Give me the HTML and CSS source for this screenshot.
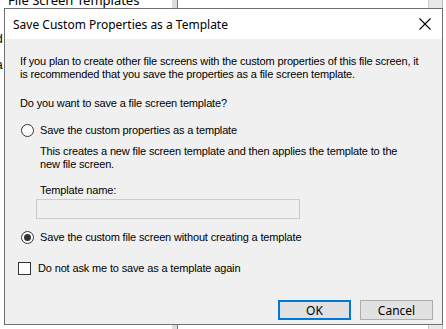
FILE: index.html
```html
<!DOCTYPE html>
<html>
<head>
<meta charset="utf-8">
<link rel="stylesheet" href="styles.css">
</head>
<body>
<div class="desk">
  <div class="bg-title">File Screen Templates</div>
  <div class="bg-left">
    <span class="bg-l1">d</span>
    <span class="bg-l2">a</span>
    <span class="bg-l3">l</span>
  </div>
  <div class="bg-scroll"></div>
  <div class="bg-scroll2"></div>
  <div class="bg-edge"></div>

  <div class="dialog">
    <div class="titlebar">
      <span class="title">Save Custom Properties as a Template</span>
      <svg class="close" width="12" height="12" viewBox="0 0 12 12"><path d="M0.5 0.5 L11.5 11.5 M11.5 0.5 L0.5 11.5" stroke="#000" stroke-width="1.1" fill="none"/></svg>
    </div>
    <div class="body">
      <p class="intro">If you plan to create other file screens with the custom properties of this file screen, it<br>is recommended that you save the properties as a file screen template.</p>
      <p class="question">Do you want to save a file screen template?</p>
      <div class="opt">
        <span class="radio"></span>
        <span>Save the custom properties as a template</span>
      </div>
      <div class="sub">
        <p class="desc">This creates a new file screen template and then applies the template to the<br>new file screen.</p>
        <p class="lbl">Template name:</p>
        <div class="input"></div>
      </div>
      <div class="opt opt2">
        <span class="radio on"></span>
        <span>Save the custom file screen without creating a template</span>
      </div>
      <div class="chk-row">
        <span class="chk"></span>
        <span>Do not ask me to save as a template again</span>
      </div>
      <div class="buttons">
        <div class="btn ok">OK</div>
        <div class="btn">Cancel</div>
      </div>
    </div>
  </div>
</div>
</body>
</html>
```
FILE: styles.css
```css
html, body {
  margin: 0;
  padding: 0;
}
body {
  width: 446px;
  height: 329px;
  overflow: hidden;
  background: #fff;
  font-family: "Liberation Sans", Arial, sans-serif;
  font-size: 11px;
  color: #000;
}
.desk {
  position: relative;
  width: 446px;
  height: 329px;
}
.bg-title {
  position: absolute;
  left: 8px;
  top: -9px;
  font-family: "Noto Sans", sans-serif;
  font-size: 13px;
  color: #000;
}
.bg-left {
  position: absolute;
  left: -4px;
  top: 26px;
  width: 8px;
  display: flex;
  flex-direction: column;
  font-size: 12px;
  line-height: 26px;
}
.bg-l3 { color: #c00; font-weight: bold; }
.bg-scroll {
  position: absolute;
  left: 172px;
  top: 0;
  width: 5px;
  height: 329px;
  background: #dcdcdc;
  border-right: 1px solid #777;
}
.bg-scroll2 {
  position: absolute;
  left: 428px;
  top: 0;
  width: 13px;
  height: 329px;
  background: #e8e8e8;
  border-left: 1px solid #ccc;
}
.bg-edge {
  position: absolute;
  left: 442px;
  top: 0;
  width: 4px;
  height: 329px;
  background: #fff;
  border-left: 1px solid #bbb;
}

.dialog {
  position: absolute;
  left: 4px;
  top: 8px;
  width: 437px;
  height: 315px;
  border: 1px solid #707070;
  background: #f0f0f0;
  display: flex;
  flex-direction: column;
}
.titlebar {
  height: 30px;
  background: #fff;
  display: flex;
  align-items: center;
  justify-content: space-between;
  padding: 0 8px 0 8px;
  flex-shrink: 0;
}
.title {
  font-family: "Noto Sans", sans-serif;
  font-size: 12px;
  color: #000;
}
.close {
  margin-right: 3px;
}
.body {
  flex: 1;
  padding: 16px 15px 0 15px;
  display: flex;
  flex-direction: column;
  letter-spacing: -0.15px;
}
p { margin: 0; white-space: nowrap; }
.intro {
  line-height: 13px;
}
.question {
  margin-top: 16px;
  line-height: 13px;
}
.opt {
  display: flex;
  align-items: center;
  gap: 6px;
  margin-top: 13px;
  height: 14px;
  padding-left: 1px;
  white-space: nowrap;
}
.radio {
  width: 11px;
  height: 11px;
  border: 1px solid #333;
  border-radius: 50%;
  background: #fff;
  position: relative;
  flex-shrink: 0;
}
.radio.on::after {
  content: "";
  position: absolute;
  left: 2px;
  top: 2px;
  width: 7px;
  height: 7px;
  border-radius: 50%;
  background: #333;
}
.sub {
  padding-left: 20px;
  margin-top: 8px;
}
.desc { line-height: 13px; }
.lbl {
  margin-top: 13px;
  line-height: 13px;
}
.input {
  margin-top: 2px;
  margin-left: -4px;
  width: 262px;
  height: 18px;
  border: 1px solid #ccc;
  background: #f0f0f0;
}
.opt2 {
  margin-top: 11px;
}
.chk-row {
  display: flex;
  align-items: center;
  gap: 7px;
  margin-top: 17px;
  height: 14px;
  margin-left: -2px;
  white-space: nowrap;
}
.chk {
  width: 11px;
  height: 11px;
  border: 1px solid #333;
  background: #fff;
  flex-shrink: 0;
}
.buttons {
  margin-top: auto;
  margin-bottom: 4px;
  display: flex;
  justify-content: flex-end;
  gap: 9px;
  margin-right: -6px;
  letter-spacing: 0;
}
.btn {
  width: 71px;
  height: 18px;
  border: 1px solid #adadad;
  background: #e1e1e1;
  display: flex;
  align-items: center;
  justify-content: center;
  font-family: "Noto Sans", sans-serif;
  font-size: 12px;
}
.btn.ok {
  border: 2px solid #0078d7;
  width: 69px;
  height: 16px;
}
```
